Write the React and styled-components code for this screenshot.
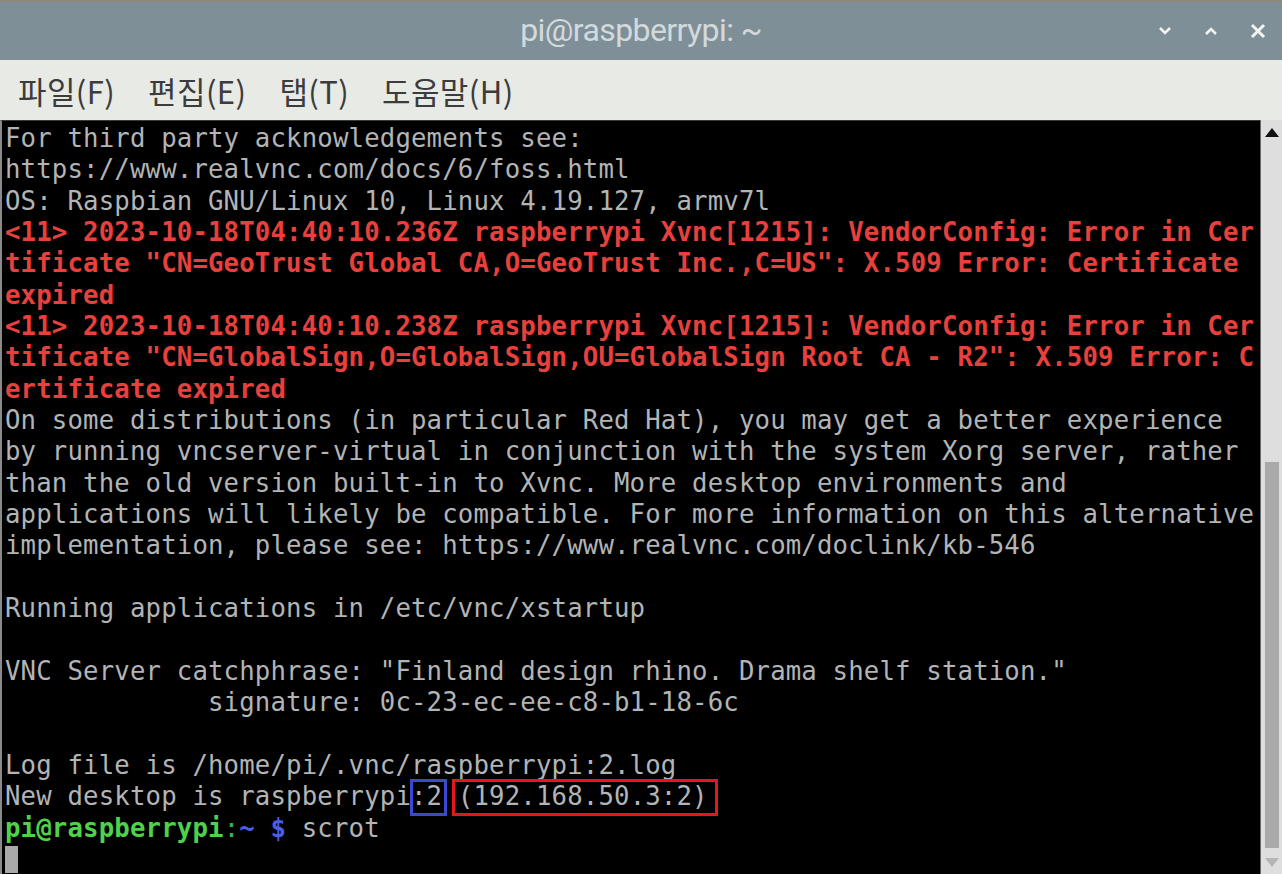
import React from "react";
import styled, { createGlobalStyle } from "styled-components";

const GlobalStyle = createGlobalStyle`
  html, body {
    margin:0;
    padding:0;
    background:#000;
    overflow:hidden;
  }
`

const Window = styled.div`
  width:1282px;
  height:874px;
  display:flex;
  flex-direction:column;
  overflow:hidden;
`

const TitleBar = styled.div`
  height:60px;
  flex:none;
  background:#7f8f97;
  border-top:2px solid #8d877c;
  box-sizing:border-box;
  display:grid;
  grid-template-columns:1fr auto 1fr;
  align-items:center;
`

const Title = styled.div`
  grid-column:2;
  font-family:Roboto, "Liberation Sans", sans-serif;
  font-size:32px;
  letter-spacing:-0.6px;
  color:#d3dadd;
  padding-bottom:2px;
`

const Controls = styled.div`
  grid-column:3;
  justify-self:end;
  display:flex;
  align-items:center;
  gap:32px;
  padding-right:16px;
`

const MenuBar = styled.div`
  height:60px;
  flex:none;
  background:#e8eae6;
  display:flex;
  align-items:center;
  gap:33px;
  padding-left:18px;
  box-sizing:border-box;
`

const MenuItem = styled.span`
  font-family:"Noto Sans CJK KR", "Noto Sans", sans-serif;
  font-size:31px;
  color:#3c3c3c;
  letter-spacing:0.4px;
`

const Body = styled.div`
  flex:1;
  display:flex;
  min-height:0;
`

const Screen = styled.div`
  flex:1;
  min-width:0;
  background:#000;
  border-left:2px solid #8a8a8a;
  border-top:1px solid #3a3a3a;
  padding:2px 0 0 3px;
  font-family:"DejaVu Sans Mono", "Liberation Mono", monospace;
  font-size:25.7px;
  letter-spacing:0.15px;
  color:#b2b4b6;
  overflow:hidden;
`

const Line = styled.div`
  height:31.35px;
  line-height:31.35px;
  white-space:pre;
  color:${p => p.$red ? '#e8403c' : 'inherit'};
  font-weight:${p => p.$red ? 'bold' : 'normal'};
`

const Green = styled.span`
  color:#4fd24a;
  font-weight:bold;
`

const Colon = styled.span`
  color:#3fae5a;
`

const Blue = styled.span`
  color:#4b5ee6;
  font-weight:bold;
`

const Marked = styled.span`
  position:relative;
  &::after{
    content:'';
    position:absolute;
    top:-2px;
    bottom:-5px;
    left:${p => p.$left}px;
    right:${p => p.$right}px;
    border:3px solid ${p => p.$color};
  }
`

const Cursor = styled.span`
  display:inline-block;
  width:13px;
  height:27px;
  margin-top:2px;
  background:#a9a9a9;
  vertical-align:top;
`

const Scrollbar = styled.div`
  width:21px;
  flex:none;
  background:#dedede;
  border-left:1px solid #6c6c6c;
  display:flex;
  flex-direction:column;
  align-items:center;
`

const Arrow = styled.div`
  height:24px;
  display:flex;
  align-items:center;
  justify-content:center;
  flex:none;
`

const Track = styled.div`
  flex:1;
  width:100%;
  display:flex;
  flex-direction:column;
  justify-content:flex-end;
  align-items:center;
  padding-bottom:2px;
`

const Thumb = styled.div`
  width:14px;
  height:386px;
  background:#a9a9a9;
`

const lines = [
  { t: "For third party acknowledgements see:" },
  { t: "https://www.realvnc.com/docs/6/foss.html" },
  { t: "OS: Raspbian GNU/Linux 10, Linux 4.19.127, armv7l" },
  { t: "<11> 2023-10-18T04:40:10.236Z raspberrypi Xvnc[1215]: VendorConfig: Error in Cer", red: true },
  { t: "tificate \"CN=GeoTrust Global CA,O=GeoTrust Inc.,C=US\": X.509 Error: Certificate", red: true },
  { t: "expired", red: true },
  { t: "<11> 2023-10-18T04:40:10.238Z raspberrypi Xvnc[1215]: VendorConfig: Error in Cer", red: true },
  { t: "tificate \"CN=GlobalSign,O=GlobalSign,OU=GlobalSign Root CA - R2\": X.509 Error: C", red: true },
  { t: "ertificate expired", red: true },
  { t: "On some distributions (in particular Red Hat), you may get a better experience" },
  { t: "by running vncserver-virtual in conjunction with the system Xorg server, rather" },
  { t: "than the old version built-in to Xvnc. More desktop environments and" },
  { t: "applications will likely be compatible. For more information on this alternative" },
  { t: "implementation, please see: https://www.realvnc.com/doclink/kb-546" },
  { t: "" },
  { t: "Running applications in /etc/vnc/xstartup" },
  { t: "" },
  { t: "VNC Server catchphrase: \"Finland design rhino. Drama shelf station.\"" },
  { t: "             signature: 0c-23-ec-ee-c8-b1-18-6c" },
  { t: "" },
  { t: "Log file is /home/pi/.vnc/raspberrypi:2.log" },
]

function Chevron({ up }) {
  return (
    <svg width="14" height="10" viewBox="0 0 14 10">
      <path d={up ? "M2 8 L7 3 L12 8" : "M2 2 L7 7 L12 2"} fill="none" stroke="#f2f4f4" strokeWidth="2.6" />
    </svg>
  )
}

export default function App() {
  return (
    <Window>
      <GlobalStyle />
      <TitleBar>
        <Title>pi@raspberrypi: ~</Title>
        <Controls>
          <Chevron />
          <Chevron up />
          <svg width="16" height="16" viewBox="0 0 16 16">
            <path d="M2 2 L14 14 M14 2 L2 14" stroke="#f2f4f4" strokeWidth="3" />
          </svg>
        </Controls>
      </TitleBar>
      <MenuBar>
        <MenuItem>파일(F)</MenuItem>
        <MenuItem>편집(E)</MenuItem>
        <MenuItem>탭(T)</MenuItem>
        <MenuItem>도움말(H)</MenuItem>
      </MenuBar>
      <Body>
        <Screen>
          {lines.map((l, i) => (
            <Line key={i} $red={l.red}>{l.t}</Line>
          ))}
          <Line>
            New desktop is raspberrypi<Marked $color="#3a48d4" $left={-1} $right={-5}>:2</Marked> <Marked $color="#e4161f" $left={-6} $right={-10}>(192.168.50.3:2)</Marked>
          </Line>
          <Line>
            <Green>pi@raspberrypi</Green><Colon>:</Colon><Blue>~</Blue> <Blue>$</Blue> scrot
          </Line>
          <Line><Cursor /></Line>
        </Screen>
        <Scrollbar>
          <Arrow>
            <svg width="14" height="9" viewBox="0 0 14 9"><path d="M0 9 L7 0 L14 9 Z" fill="#111" /></svg>
          </Arrow>
          <Track>
            <Thumb />
          </Track>
          <Arrow>
            <svg width="14" height="9" viewBox="0 0 14 9"><path d="M0 0 L7 9 L14 0 Z" fill="#b5b5b5" /></svg>
          </Arrow>
        </Scrollbar>
      </Body>
    </Window>
  );
}
